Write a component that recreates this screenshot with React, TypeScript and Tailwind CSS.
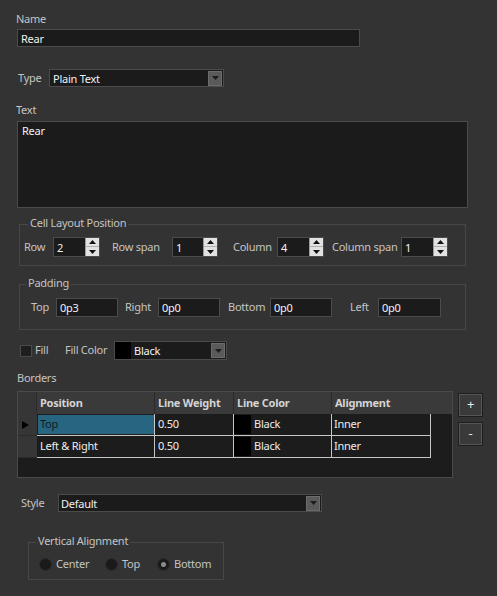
import React from "react";

function Arrow() {
  return (
    <div className="ml-auto mr-[1px] w-[14px] h-[15px] bg-[#5a5a5a] border border-[#6c6c6c] flex items-center justify-center">
      <svg width="7" height="4" viewBox="0 0 7 4">
        <path d="M0 0 H7 L3.5 4 Z" fill="#1c1c1c" />
      </svg>
    </div>
  );
}

function Field({ className, value }: { className: string; value: string }) {
  return (
    <div className={"border border-[#4b4b4b] bg-[#1b1b1b] text-[#f2f2f2] pl-[3px] flex items-center leading-none " + className}>
      {value}
    </div>
  );
}

function Spin({ className, value }: { className: string; value: string }) {
  return (
    <div className={"border border-[#4b4b4b] bg-[#1b1b1b] text-[#f2f2f2] flex h-[20px] " + className}>
      <div className="flex-1 flex items-center pl-[3px] leading-none">{value}</div>
      <div className="w-[14px] flex flex-col bg-[#e2e2e2] border-l border-[#9a9a9a]">
        <div className="h-1/2 flex items-center justify-center border-b border-[#b0b0b0]">
          <svg width="7" height="4" viewBox="0 0 7 4">
            <path d="M0 4 H7 L3.5 0 Z" fill="#111" />
          </svg>
        </div>
        <div className="h-1/2 flex items-center justify-center">
          <svg width="7" height="4" viewBox="0 0 7 4">
            <path d="M0 0 H7 L3.5 4 Z" fill="#111" />
          </svg>
        </div>
      </div>
    </div>
  );
}

function Radio({ checked }: { checked?: boolean }) {
  return (
    <div className="w-[13px] h-[13px] rounded-full bg-[#1a1a1a] border border-[#2c2c2c] flex items-center justify-center">
      {checked && <div className="w-[5px] h-[5px] rounded-full bg-[#8a8a8a]" />}
    </div>
  );
}

export default function App() {
  return (
    <div className="w-[497px] h-[596px] bg-[#333333] overflow-hidden font-['Noto_Sans',sans-serif] text-[11px] tracking-[-0.25px] text-[#c4c4c4]">
      <div className="pl-[16px] pt-[12px] flex flex-col items-start">
        {/* Name */}
        <div className="h-[14px] leading-[14px]">Name</div>
        <Field className="mt-[3px] ml-[1px] w-[343px] h-[18px]" value="Rear" />

        {/* Type */}
        <div className="mt-[22px] flex items-center ml-[2px]">
          <div className="w-[31px]">Type</div>
          <div className="w-[175px] h-[18px] border border-[#4b4b4b] bg-[#1b1b1b] text-[#f2f2f2] flex items-center pl-[3px]">
            <span className="leading-none">Plain Text</span>
            <Arrow />
          </div>
        </div>

        {/* Text */}
        <div className="mt-[16px] h-[14px] leading-[14px]">Text</div>
        <div className="mt-[4px] ml-[1px] w-[451px] h-[87px] border border-[#4b4b4b] bg-[#1b1b1b] text-[#f2f2f2] pl-[4px] pt-[1px]">
          Rear
        </div>

        {/* Cell Layout Position */}
        <div className="relative mt-[16px] ml-[3px] w-[447px] h-[42px] border border-[#474747]">
          <div className="absolute left-[8px] -top-[10px] px-[2px] bg-[#333333] leading-[16px]">Cell Layout Position</div>
          <div className="flex items-center mt-[12px] ml-[4px]">
            <div className="w-[29px]">Row</div>
            <Spin className="w-[47px]" value="2" />
            <div className="ml-[12px] w-[60px]">Row span</div>
            <Spin className="w-[46px]" value="1" />
            <div className="ml-[15px] w-[44px]">Column</div>
            <Spin className="w-[47px]" value="4" />
            <div className="ml-[8px] w-[69px]">Column span</div>
            <Spin className="w-[47px]" value="1" />
          </div>
        </div>

        {/* Padding */}
        <div className="relative mt-[18px] ml-[3px] w-[447px] h-[46px] border border-[#474747]">
          <div className="absolute left-[6px] -top-[10px] px-[2px] bg-[#333333] leading-[16px]">Padding</div>
          <div className="flex items-center mt-[13px] ml-[11px]">
            <div className="w-[25px]">Top</div>
            <Field className="w-[62px] h-[19px]" value="0p3" />
            <div className="ml-[7px] w-[33px]">Right</div>
            <Field className="w-[62px] h-[19px]" value="0p0" />
            <div className="ml-[8px] w-[42px]">Bottom</div>
            <Field className="w-[62px] h-[19px]" value="0p0" />
            <div className="ml-[18px] w-[28px]">Left</div>
            <Field className="w-[63px] h-[19px]" value="0p0" />
          </div>
        </div>

        {/* Fill */}
        <div className="mt-[11px] ml-[4px] flex items-center h-[19px]">
          <div className="w-[12px] h-[12px] bg-[#1e1e1e] border border-[#4a4a4a]" />
          <div className="ml-[3px] w-[30px]">Fill</div>
          <div className="w-[49px]">Fill Color</div>
          <div className="w-[113px] h-[19px] border border-[#4b4b4b] bg-[#1b1b1b] text-[#f2f2f2] flex items-center">
            <div className="w-[16px] h-[17px] bg-black" />
            <span className="ml-[3px] leading-none">Black</span>
            <Arrow />
          </div>
        </div>

        {/* Borders */}
        <div className="mt-[11px] ml-[1px] h-[14px] leading-[14px]">Borders</div>
        <div className="mt-[6px] ml-[1px] flex items-start">
          <div className="w-[436px] h-[87px] border border-[#4a4a4a] bg-[#1c1c1c]">
            <div className="flex h-[22px] bg-[#3a3a3a] font-bold text-[#d4d4d4]">
              <div className="w-[19px] bg-[#363636] border-r border-[#2a2a2a]" />
              <div className="w-[118px] flex items-center pl-[3px] border-r border-[#2a2a2a]">Position</div>
              <div className="w-[79px] flex items-center pl-[3px] border-r border-[#2a2a2a]">Line Weight</div>
              <div className="w-[98px] flex items-center pl-[3px] border-r border-[#2a2a2a]">Line Color</div>
              <div className="w-[99px] flex items-center pl-[3px]">Alignment</div>
            </div>
            {[
              { pos: "Top", sel: true },
              { pos: "Left & Right", sel: false },
            ].map((r, i) => (
              <div key={i} className="flex h-[22px] text-[#eeeeee]">
                <div className="w-[19px] bg-[#363636] border-b border-[#2a2a2a] flex items-center pl-[4px]">
                  {r.sel && (
                    <svg width="7" height="8" viewBox="0 0 7 8">
                      <path d="M0 0 L7 4 L0 8 Z" fill="#000" />
                    </svg>
                  )}
                </div>
                <div className="w-[118px] border-r border-b border-[#c6c6c6] flex items-center">
                  {r.sel ? (
                    <div className="ml-[1px] w-[116px] h-[19px] bg-[#286580] text-[#0e1c26] flex items-center pl-[2px]">{r.pos}</div>
                  ) : (
                    <span className="pl-[3px]">{r.pos}</span>
                  )}
                </div>
                <div className="w-[79px] border-r border-b border-[#c6c6c6] flex items-center pl-[3px]">0.50</div>
                <div className="w-[98px] border-r border-b border-[#c6c6c6] flex items-center">
                  <div className="w-[17px] h-[19px] bg-black" />
                  <span className="ml-[3px]">Black</span>
                </div>
                <div className="w-[99px] border-r border-b border-[#c6c6c6] flex items-center pl-[2px]">Inner</div>
              </div>
            ))}
          </div>
          <div className="ml-[5px] mt-[2px] flex flex-col gap-[5px]">
            <div className="w-[25px] h-[24px] bg-[#3a3a3a] border border-[#1e1e1e] outline outline-1 -outline-offset-2 outline-[#555] flex items-center justify-center text-[#e8e8e8] text-[13px]">+</div>
            <div className="w-[25px] h-[24px] bg-[#3a3a3a] border border-[#1e1e1e] outline outline-1 -outline-offset-2 outline-[#555] flex items-center justify-center text-[#e8e8e8] text-[13px]">-</div>
          </div>
        </div>

        {/* Style */}
        <div className="mt-[16px] ml-[5px] flex items-center">
          <div className="w-[37px]">Style</div>
          <div className="w-[264px] h-[18px] border border-[#4b4b4b] bg-[#1b1b1b] text-[#f2f2f2] flex items-center pl-[2px]">
            <span className="leading-none">Default</span>
            <Arrow />
          </div>
        </div>

        {/* Vertical Alignment */}
        <div className="relative mt-[30px] ml-[12px] w-[196px] h-[38px] border border-[#474747]">
          <div className="absolute left-[7px] -top-[10px] px-[2px] bg-[#333333] leading-[16px]">Vertical Alignment</div>
          <div className="flex items-center mt-[13px] ml-[10px]">
            <Radio />
            <span className="ml-[4px] w-[49px]">Center</span>
            <Radio />
            <span className="ml-[4px] w-[35px]">Top</span>
            <Radio checked />
            <span className="ml-[4px]">Bottom</span>
          </div>
        </div>
      </div>
    </div>
  );
}
